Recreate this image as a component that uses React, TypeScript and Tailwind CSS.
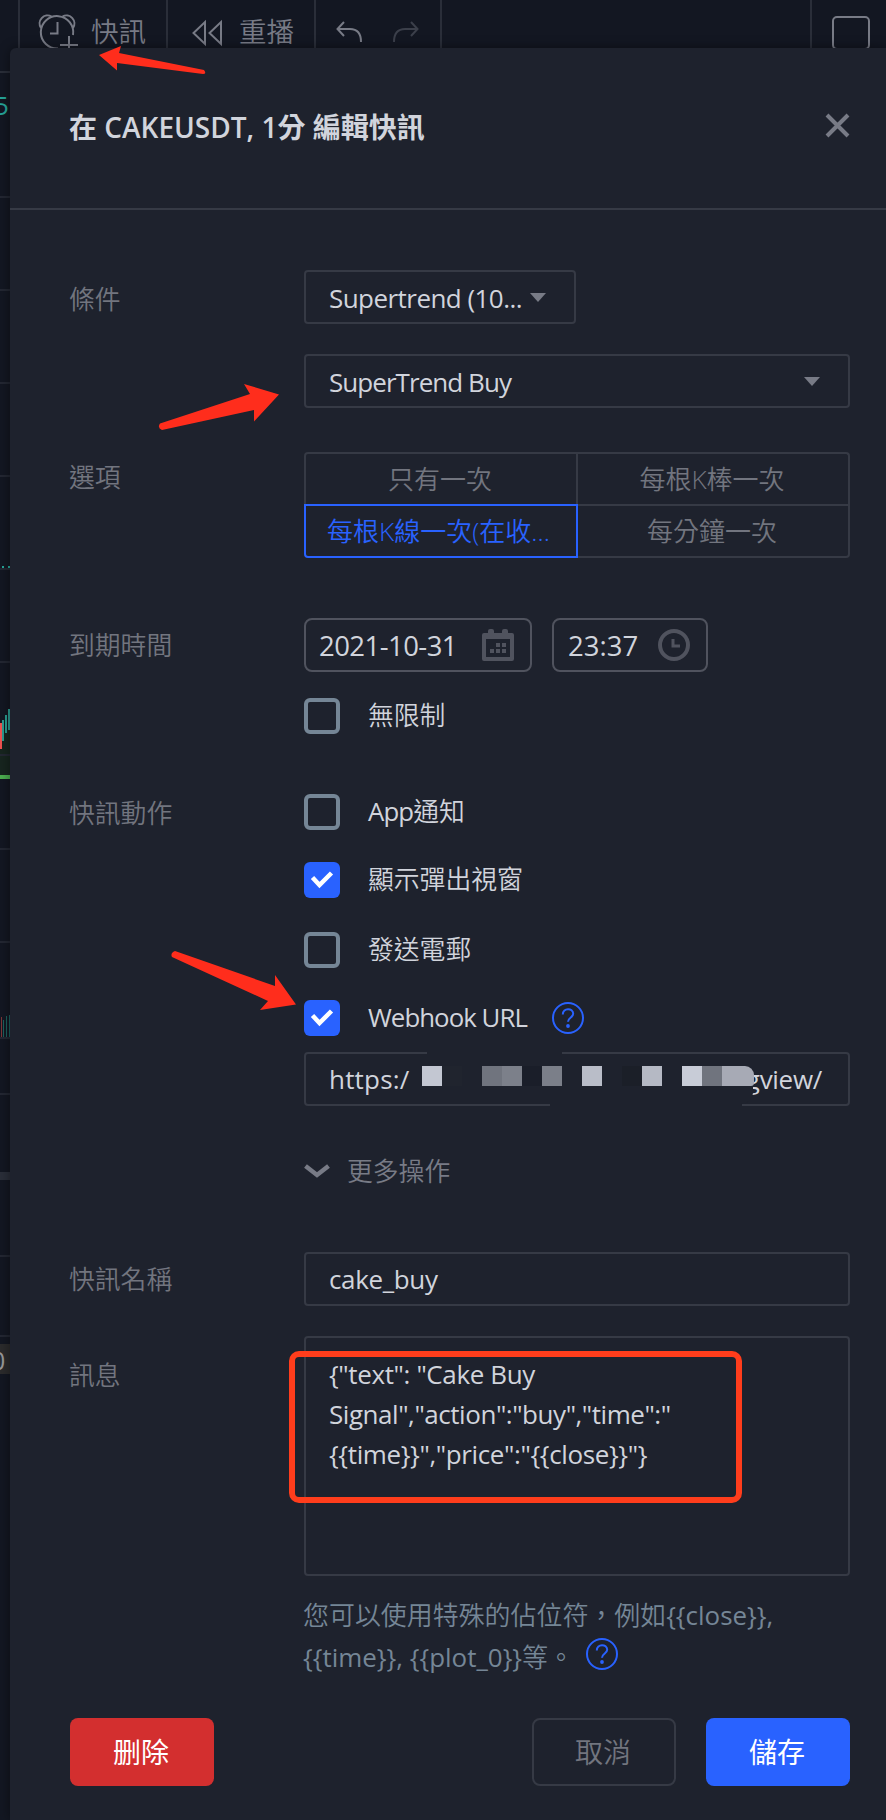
import React from "react";

function Toolbar() {
  return (
    <header className="flex h-[73px] w-full shrink-0 border-b-2 border-[#2a2e39] bg-[#131722] text-[#787b86]">
      <div className="w-5 border-r-2 border-[#2a2e39]" />
      <div className="flex w-[148px] border-r-2 border-[#2a2e39] pl-[17px]">
        <svg width="44" height="54" viewBox="37 0 44 54" fill="none" stroke="currentColor" strokeWidth="2">
          <path d="M73 35A16.2 16.2 0 1 0 58 48.500" />
          <path d="M41 28A8 8 0 0 1 51.500 16.500M73 28A8 8 0 0 0 62.500 16.500" />
          <path d="M57.500 22v11.500H50M69 36v18M60 45h18" />
        </svg>
        <span className="ml-[10px] mt-3 text-[27.500px] font-[350] leading-10">快訊</span>
      </div>
      <div className="flex w-[148px] border-r-2 border-[#2a2e39] pl-6">
        <svg className="mt-[19px]" width="31" height="28" viewBox="0 0 31 28" fill="none" stroke="currentColor" strokeWidth="2">
          <path d="M13 3v22L1.500 14zM29 3v22L17.500 14z" />
        </svg>
        <span className="ml-4 mt-3 text-[27.500px] font-[350] leading-10">重播</span>
      </div>
      <div className="flex w-[126px] gap-[30px] border-r-2 border-[#2a2e39] pl-5 pt-5">
        <svg width="27" height="24" viewBox="0 0 27 24" fill="none" stroke="currentColor" strokeWidth="2">
          <path d="M8 2L1.500 9L8 16M1.500 9H14Q25 9 25 22" />
        </svg>
        <svg className="text-[#3b3f4a]" width="27" height="24" viewBox="0 0 27 24" fill="none" stroke="currentColor" strokeWidth="2">
          <path d="M18 2L24.500 9L18 16M24.500 9H12Q1 9 1 22" />
        </svg>
      </div>
      <div className="grow" />
      <div className="w-[76px] border-l-2 border-[#2a2e39] pl-5 pt-4">
        <div className="h-[34px] w-[38px] rounded-[5px] border-2 border-[#787b86]" />
      </div>
    </header>
  );
}

function Chart() {
  const grid = [197, 290, 383, 476, 569, 662, 755, 849, 942, 1038, 1094, 1256, 1336];
  return (
    <>
      <svg className="absolute left-0 top-[73px]" width="12" height="1747" viewBox="0 73 12 1747">
        <rect y="730" width="12" height="46" fill="#17251f" />
        {grid.map((y) => (
          <rect key={y} y={y - 1} width="12" height="2" fill="#232732" />
        ))}
        <path d="M2 567h2M8 567h2" stroke="#26a69a" strokeWidth="2" />
        <rect y="723" width="2" height="26" fill="#ef5350" />
        <path d="M3 720v21M6 715v18M9 709v21" stroke="#2a9c90" strokeWidth="2" />
        <rect y="775" width="12" height="4" fill="#4caf50" />
        <path d="M1.500 1017v20" stroke="#7d3638" />
        <path d="M3.500 1020v17M6.500 1016v21M9.500 1015v22" stroke="#1c625e" />
        <rect y="1172" width="12" height="8" fill="#2a2e39" />
        <rect y="1344" width="12" height="30" fill="#2b2b2c" />
      </svg>
      <div className="absolute -left-[6px] top-[90px] text-[26px] leading-[30px] text-[#26a69a]">5</div>
      <div className="absolute -left-[9px] top-[1345px] text-[25px] leading-[30px] text-[#9a9a9a]">0</div>
    </>
  );
}

function Row({ label, className, labelClass = "pt-2", children }: { label: string; className: string; labelClass?: string; children: React.ReactNode }) {
  return (
    <div className={`flex ${className}`}>
      <div className={`-ml-px mr-px w-[234px] shrink-0 text-[25.800px] font-[350] leading-[38px] text-[#72757f] ${labelClass}`}>{label}</div>
      <div className="flex w-[546px] flex-col">{children}</div>
    </div>
  );
}

function Select({ className, children }: { className: string; children: React.ReactNode }) {
  return (
    <div className={`flex h-[54px] items-center justify-between rounded border-2 border-[#363a45] pl-[23px] ${className}`}>
      {children}
      <svg width="16" height="9" viewBox="0 0 16 9" fill="#787b86">
        <path d="M0 0h16L8 9z" />
      </svg>
    </div>
  );
}

function Check({ on, className, children }: { on?: boolean; className: string; children: React.ReactNode }) {
  return (
    <div className={`flex h-9 items-center ${className}`}>
      {on ? (
        <div className="h-9 w-9 rounded-[6px] bg-[#2962ff]">
          <svg width="36" height="36" viewBox="0 0 36 36" fill="none" stroke="#fff" strokeWidth="4.500">
            <path d="M8.500 15.500l7 7.500L27.500 11" />
          </svg>
        </div>
      ) : (
        <div className="h-9 w-9 rounded-[6px] border-4 border-[#758696]" />
      )}
      <div className="-mt-[3px] ml-7 text-[25.800px] leading-9">{children}</div>
    </div>
  );
}

function Help() {
  return (
    <svg width="32" height="32" viewBox="0 0 32 32" fill="none" stroke="#2962ff" strokeWidth="2">
      <circle cx="16" cy="16" r="15" />
      <path d="M10.800 12.500C10.800 5.500 21.200 5.500 21.200 11.800C21.200 15.500 16 15.500 16 19.800" />
      <circle cx="16" cy="24" r="1.900" fill="#2962ff" stroke="none" />
    </svg>
  );
}

const mosaic = [
  "bg-[#c3c7d2]", "bg-[#20242e]", "bg-[#1e222d]", "bg-[#70747e]", "bg-[#7c808a]", "bg-[#1a1e29]",
  "bg-[#7b7f89]", "bg-[#1e222d]", "bg-[#b9bdc8]", "bg-[#1e222d]", "bg-[#1b1f28]", "bg-[#b5b9c4]",
  "bg-[#1e222d]", "bg-[#c8ccd7]", "bg-[#70747e]",
];

function Dialog() {
  return (
    <section className="absolute left-[10px] top-12 flex h-[1772px] w-[876px] flex-col rounded-tl-[6px] bg-[#1e222d] shadow-[0_0_12px_rgba(0,0,0,0.45)]">
      <div className="flex h-[162px] justify-between border-b-2 border-[#363a45] pl-[59px] pr-[36px]">
        <h1 className="mt-[59px] whitespace-pre text-[28px] font-semibold leading-10 text-[#d1d4dc]">
          在 CAKEUSDT, <span>1</span>分 編輯快訊
        </h1>
        <svg className="mt-[65px]" width="25" height="25" viewBox="0 0 25 25" stroke="#787b86" strokeWidth="4">
          <path d="M2 2l21 21M23 2L2 23" />
        </svg>
      </div>

      <div className="flex flex-col pl-[60px] text-[26px] text-[#d1d4dc]">
        <Row label="條件" labelClass="pt-[10px]" className="mt-[60px]">
          <Select className="w-[272px] pr-[28px]">
            <span className="mt-[2px] tracking-[-0.550px]">Supertrend (10...</span>
          </Select>
          <Select className="mt-[30px] pr-[28px]">
            <span className="mt-[2px] tracking-[-0.950px]">SuperTrend Buy</span>
          </Select>
        </Row>

        <Row label="選項" labelClass="pt-[6px]" className="mt-11">
          <div className="grid h-[106px] grid-cols-[274px_272px] grid-rows-[52px_54px] text-center text-[26px] font-[350] leading-[50px] text-[#72757f]">
            <div className="rounded-tl border-l-2 border-t-2 border-r-2 border-[#363a45] pr-[2px]">只有一次</div>
            <div className="rounded-tr border-r-2 border-t-2 border-[#363a45] pr-[2px]">每根K棒一次</div>
            <div className="rounded-bl border-2 border-[#2962ff] pr-[5px] text-[#2962ff]">每根K線一次(在收...</div>
            <div className="rounded-br border-b-2 border-r-2 border-t-2 border-[#363a45] pr-[2px]">每分鐘一次</div>
          </div>
        </Row>

        <Row label="到期時間" className="mt-[60px]">
          <div className="flex gap-5">
            <div className="flex h-[54px] w-[228px] items-center justify-between rounded-lg border-2 border-[#50535e] pl-[13px] pr-4">
              <span className="mt-[2px] text-[27.500px] tracking-[-0.550px]">2021-10-31</span>
              <svg width="32" height="32" viewBox="0 0 32 32" fill="#50535e">
                <path fillRule="evenodd" d="M0 6a2 2 0 0 1 2-2h4V2a2 2 0 0 1 2-2h2a2 2 0 0 1 2 2v2h8V2a2 2 0 0 1 2-2h2a2 2 0 0 1 2 2v2h4a2 2 0 0 1 2 2v24a2 2 0 0 1-2 2H2a2 2 0 0 1-2-2zM4 10v18h24V10z" />
                <path d="M14 14h4v4h-4zM20 14h4v4h-4zM8 20h4v4H8zM14 20h4v4h-4zM20 20h4v4h-4z" />
              </svg>
            </div>
            <div className="flex h-[54px] w-[156px] items-center justify-between rounded-lg border-2 border-[#50535e] pl-[14px] pr-4">
              <span className="mt-[2px] text-[27.500px]">23:37</span>
              <svg width="32" height="32" viewBox="0 0 32 32" fill="none" stroke="#50535e">
                <circle cx="16" cy="16" r="14" strokeWidth="4" />
                <path d="M15 10v7h7" strokeWidth="3" />
              </svg>
            </div>
          </div>
          <Check className="mt-[26px] font-[350]">無限制</Check>
        </Row>

        <Row label="快訊動作" className="mt-[52px]">
          <Check className="mt-2">
            <span className="tracking-[-0.900px]">App</span><span className="font-[350]">通知</span>
          </Check>
          <Check on className="mt-8 font-[350]">顯示彈出視窗</Check>
          <Check className="mt-[34px] font-[350]">發送電郵</Check>
          <div className="mt-8 flex items-center">
            <Check on className="tracking-[-0.950px]">Webhook URL</Check>
            <div className="ml-[25px]"><Help /></div>
          </div>
          <div className="relative mt-4 flex h-[54px] items-center justify-between rounded border-2 border-[#363a45] pl-[23px] pr-[26px]">
            <span className="tracking-[0.200px]">https:/</span>
            <span className="tracking-[-0.300px]">gview/</span>
            <div className="absolute -top-[2px] left-[121px] h-[2px] w-[135px] bg-[#1e222d]" />
            <div className="absolute -bottom-[2px] left-[244px] h-[2px] w-[192px] bg-[#1e222d]" />
            <div className="absolute left-[416px] top-[30px] h-5 w-[31px] rounded-br-xl bg-[#1e222d]" />
            <div className="absolute left-[116px] top-[12px] flex h-5 w-[332px] overflow-hidden rounded-br-[3px] rounded-tr-[9px]">
              {mosaic.map((c, i) => (
                <div key={i} className={`h-5 w-5 shrink-0 ${c}`} />
              ))}
              <div className="h-5 grow bg-[#a7aab5]" />
            </div>
          </div>
          <div className="mt-[45px] flex h-10 items-center text-[#787b86]">
            <svg width="26" height="16" viewBox="0 0 26 16" fill="none" stroke="currentColor" strokeWidth="4.500">
              <path d="M1.500 3L13 12L24.500 3" />
            </svg>
            <span className="ml-[17px] text-[25.800px] font-[350]">更多操作</span>
          </div>
        </Row>

        <Row label="快訊名稱" className="mt-[61px]">
          <div className="flex h-[54px] items-center rounded border-2 border-[#363a45] pl-[23px] tracking-[-0.350px]">cake_buy</div>
        </Row>

        <Row label="訊息" labelClass="pt-5" className="mt-[30px]">
          <div className="relative h-[240px] whitespace-pre rounded border-2 border-[#363a45] pl-[23px] pt-[16px] leading-10 tracking-[-0.380px]">
            <div>{'{"text": "Cake Buy'}</div>
            <div className="tracking-[-0.450px]">{'Signal","action":"buy","time":"'}</div>
            <div>{'{{time}}","price":"{{close}}"}'}</div>
            <div className="absolute -left-[17px] top-[13px] h-[152px] w-[453px] rounded-[10px] border-[6px] border-[#ff3d1c]" />
          </div>
          <div className="-ml-px mt-[18px] whitespace-pre text-[25.950px] leading-[42px] text-[#758696]">
            <div><span className="font-[350]">您可以使用特殊的佔位符，例如</span>{"{{close}},"}</div>
            <div className="flex">
              {"{{time}}, {{plot_0}}"}<span className="font-[350]">等。</span>
              <div className="ml-[12px] mt-[2px]"><Help /></div>
            </div>
          </div>
        </Row>

        <div className="mt-10 flex w-[780px] text-[28px] leading-[67px]">
          <button className="h-[68px] w-36 rounded-lg bg-[#d32f2f] pr-[2px] text-white">删除</button>
          <div className="grow" />
          <button className="h-[68px] w-36 rounded-lg border-2 border-[#363a45] pr-[2px] font-[350] leading-[63px] text-[#72757f]">取消</button>
          <button className="ml-[30px] h-[68px] w-36 rounded-lg bg-[#2962ff] pr-[2px] text-white">儲存</button>
        </div>
      </div>
    </section>
  );
}

export default function App() {
  return (
    <main
      lang="zh-Hant"
      className="relative h-[1820px] w-[886px] overflow-hidden bg-[#131722] font-['Open_Sans','Noto_Sans_CJK_TC',sans-serif]"
    >
      <Toolbar />
      <Chart />
      <Dialog />
      <svg className="pointer-events-none absolute left-0 top-0" width="320" height="1020" viewBox="0 0 320 1020" fill="#ff2d1c">
        <path d="M99 55L121 46L119 53L204 70Q207 74 203 74L117 63V70.500Z" />
        <path d="M279 394.500L244 384L250 394L160 423.500Q157 428 162 430L254 410V421.500Z" />
        <path d="M296 1004.500L275 975V986L175 951Q170 953 172 957L268 1001L260 1010Z" />
      </svg>
    </main>
  );
}
